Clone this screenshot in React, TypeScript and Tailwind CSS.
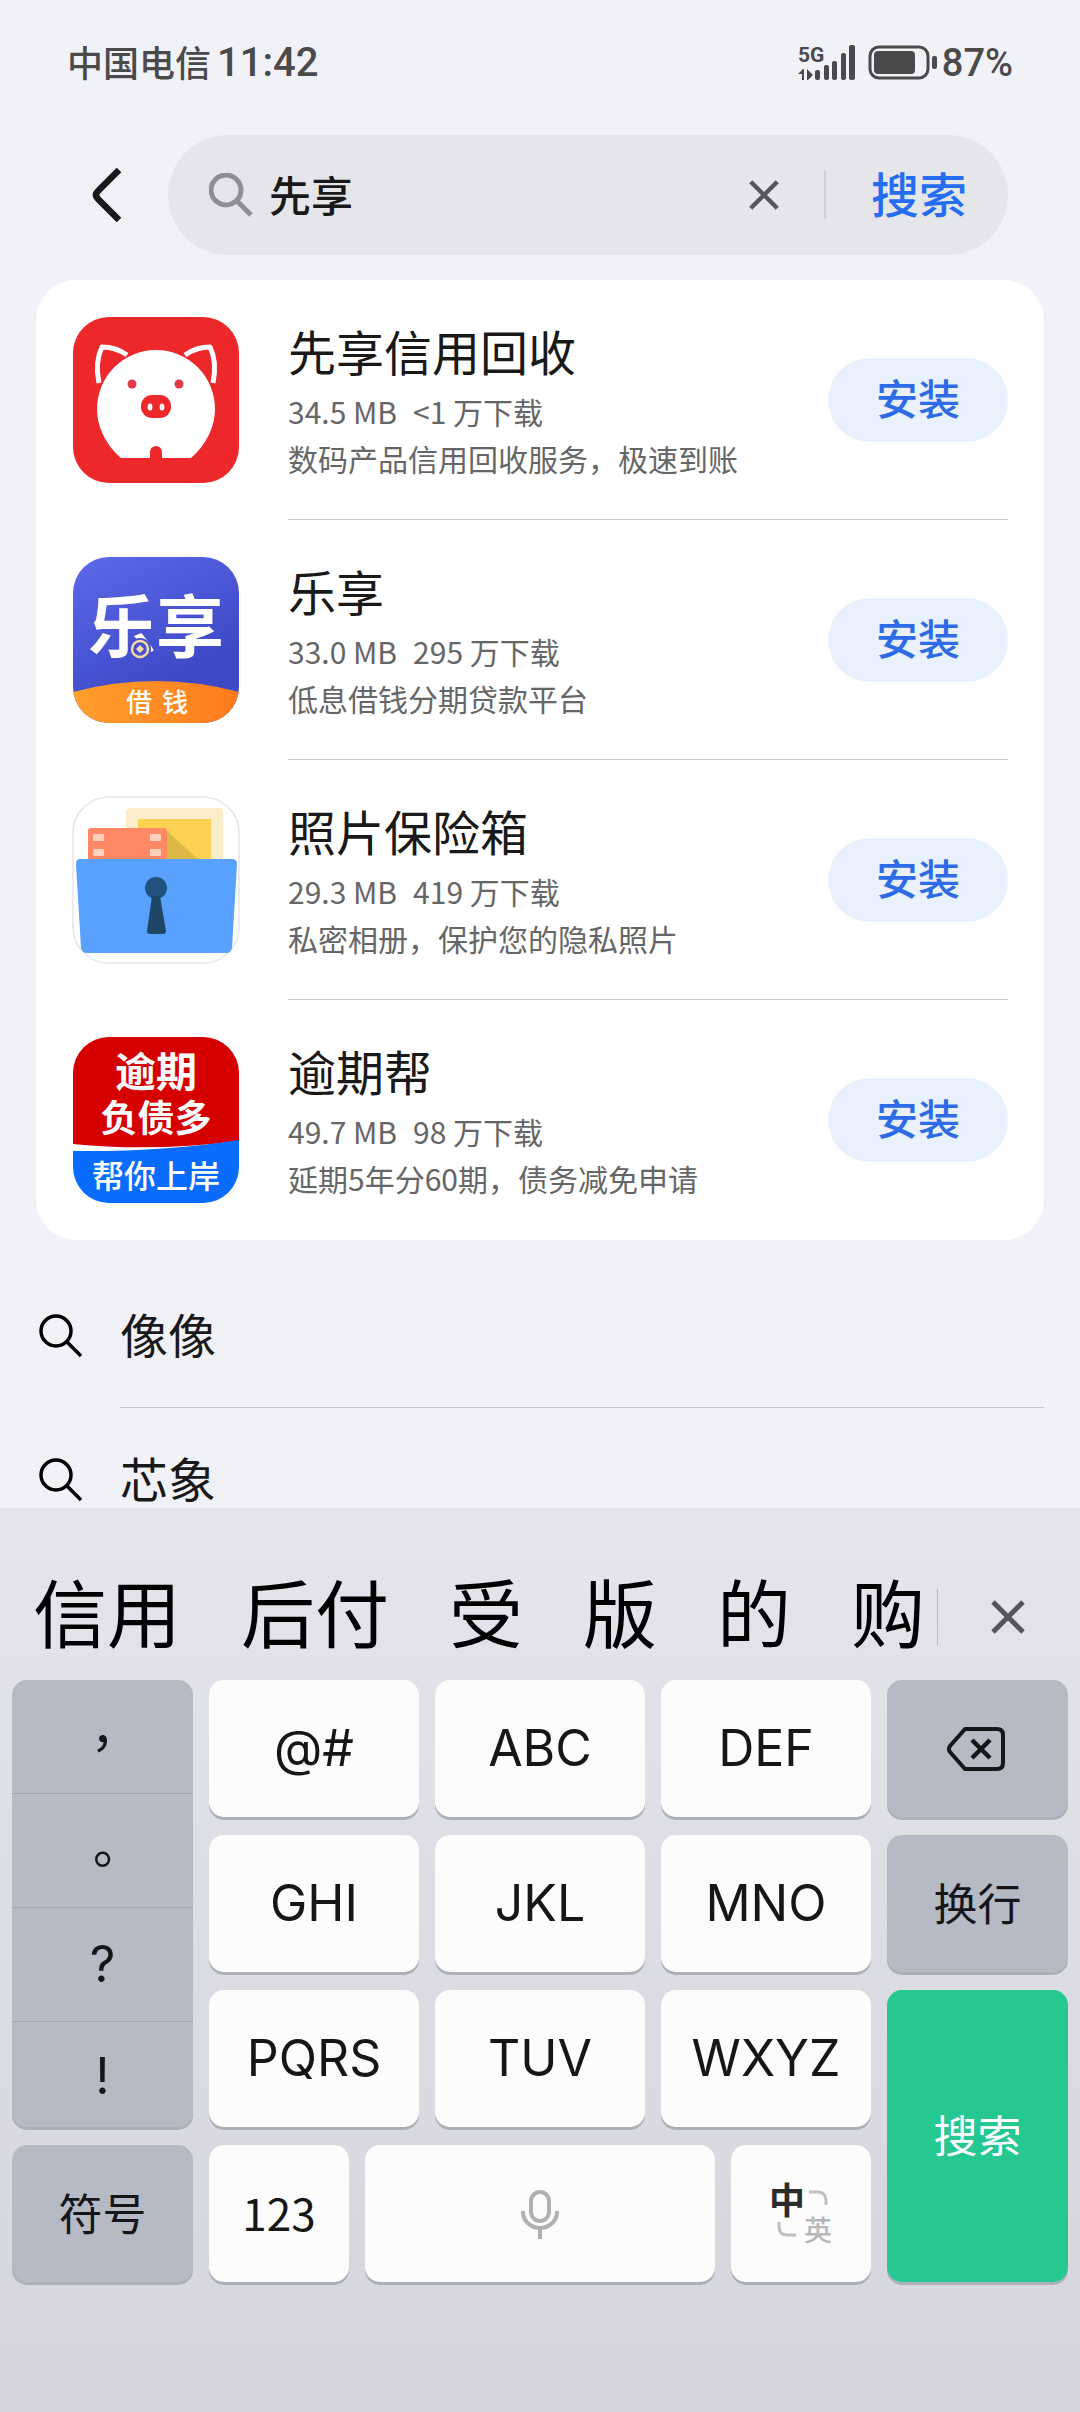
import { useState } from 'react';
import type { ReactNode } from 'react';

interface AppItem {
  name: string;
  size: string;
  downloads: string;
  desc: string;
  icon: ReactNode;
}

function PigIcon() {
  return (
    <svg viewBox="0 0 166 166" className="w-full h-full" aria-hidden="true">
      <rect width="166" height="166" rx="36" fill="#ec282b" />
      <path d="M26 66 C23 51 25 38 29 30 C38 30 47 33 54 38" fill="none" stroke="#fff" strokeWidth="5" strokeLinejoin="round" />
      <path d="M140 66 C143 51 141 38 137 30 C128 30 119 33 112 38" fill="none" stroke="#fff" strokeWidth="5" strokeLinejoin="round" />
      <path d="M48 141 C33 128 24 110 24 92 A59 59 0 0 1 142 92 C142 110 133 128 118 141 H89 V135 A6 6 0 0 0 77 135 V141 Z" fill="#fff" />
      <circle cx="59" cy="67" r="4.5" fill="#e23a48" />
      <circle cx="106" cy="67" r="4.5" fill="#e23a48" />
      <rect x="68" y="78" width="30" height="23" rx="11" fill="#ec282b" />
      <ellipse cx="77" cy="90" rx="2.4" ry="3.6" fill="#fff" />
      <ellipse cx="89" cy="90" rx="2.4" ry="3.6" fill="#fff" />
    </svg>
  );
}

function LexiangIcon() {
  return (
    <svg viewBox="0 0 166 166" className="w-full h-full" aria-hidden="true">
      <defs>
        <linearGradient id="lexiang-bg" x1="0.2" y1="0" x2="0.7" y2="1">
          <stop offset="0" stopColor="#5966e6" />
          <stop offset="0.75" stopColor="#3f49c6" />
        </linearGradient>
        <linearGradient id="lexiang-orange" x1="0" y1="0" x2="1" y2="0">
          <stop offset="0" stopColor="#ff9f2c" />
          <stop offset="1" stopColor="#ff7a1c" />
        </linearGradient>
        <clipPath id="lexiang-clip">
          <rect width="166" height="166" rx="36" />
        </clipPath>
      </defs>
      <g clipPath="url(#lexiang-clip)">
        <rect width="166" height="166" fill="url(#lexiang-bg)" />
        <text x="15" y="95" fontSize="68" fontWeight="700" fill="#fff">乐享</text>
        <circle cx="67" cy="92" r="11" fill="#4550cd" />
        <circle cx="67" cy="92" r="8" fill="none" stroke="#f6d7a8" strokeWidth="2.5" />
        <path d="M67 88 L71 92 L67 96 L63 92 Z" fill="#f6d7a8" />
        <path d="M0 135 Q83 113 166 135 V166 H0 Z" fill="url(#lexiang-orange)" />
        <text x="53" y="155" fontSize="26" fontWeight="500" fill="#fff">借</text>
        <text x="89" y="155" fontSize="26" fontWeight="500" fill="#fff">钱</text>
      </g>
    </svg>
  );
}

function PhotoSafeIcon() {
  return (
    <svg viewBox="0 0 166 166" className="w-full h-full overflow-visible" aria-hidden="true">
      <rect x="0" y="0" width="166" height="166" rx="36" fill="#fff" stroke="#e4e7ea" strokeWidth="1.5" />
      <path d="M53 64 V15 Q53 11 57 11 H146 Q150 11 150 15 V64 Z" fill="#fbedca" />
      <rect x="65" y="22" width="73" height="42" fill="#fcd253" />
      <path d="M94 34 L126 63 H94 Z" fill="#dbb946" />
      <path d="M15 64 V34 Q15 31 18 31 H91 Q94 31 94 34 V64 Z" fill="#ff8965" />
      <g fill="#ffd0bd">
        <rect x="20" y="37" width="11" height="7" rx="1" />
        <rect x="77" y="37" width="11" height="7" rx="1" />
        <rect x="20" y="52" width="11" height="7" rx="1" />
        <rect x="77" y="52" width="11" height="7" rx="1" />
      </g>
      <path d="M7 62 H159 Q164 62 164 67 L159 151 Q158 156 153 156 H14 Q9 156 8 151 L3 67 Q3 62 7 62 Z" fill="#58a1ff" />
      <circle cx="83" cy="91" r="11" fill="#20517f" />
      <path d="M79 99 H87 L93 134 Q93 137 90 137 H77 Q74 137 74 134 Z" fill="#1f4868" />
    </svg>
  );
}

function YuqiIcon() {
  return (
    <svg viewBox="0 0 166 166" className="w-full h-full" aria-hidden="true">
      <defs>
        <clipPath id="yuqi-clip">
          <rect width="166" height="166" rx="36" />
        </clipPath>
      </defs>
      <g clipPath="url(#yuqi-clip)">
        <rect width="166" height="166" fill="#fff" />
        <path d="M0 0 H166 V104 Q80 115 0 107 Z" fill="#d50000" />
        <path d="M0 114 Q90 115 166 103 V166 H0 Z" fill="#0a6bff" />
        <text x="83" y="50" fontSize="41" fontWeight="700" fill="#fff" textAnchor="middle">逾期</text>
        <text x="83" y="95" fontSize="37" fontWeight="700" fill="#fff" textAnchor="middle">负债多</text>
        <text x="83" y="151" fontSize="32" fontWeight="500" fill="#fff" textAnchor="middle">帮你上岸</text>
      </g>
    </svg>
  );
}

function SearchIcon({ className, strokeWidth }: { className: string; strokeWidth: number }) {
  return (
    <svg viewBox="0 0 44 44" className={className} fill="none" stroke="currentColor" strokeWidth={strokeWidth} aria-hidden="true">
      <circle cx="17" cy="17" r="15" />
      <path d="M27.5 27.5 L42 42" />
    </svg>
  );
}

function CloseIcon({ className }: { className: string }) {
  return (
    <svg viewBox="0 0 34 34" className={className} fill="none" stroke="currentColor" strokeWidth="5" aria-hidden="true">
      <path d="M2 2 L32 32 M32 2 L2 32" />
    </svg>
  );
}

function SignalIcon() {
  return (
    <svg viewBox="0 0 58 36" className="w-[58px] h-9 overflow-visible" fill="#4a4a4a" aria-label="5G">
      <text x="0" y="17" fontSize="21" fontWeight="700" fontFamily="Roboto, sans-serif">5G</text>
      <path d="M0 29 L5 24 H6 V35 H4 V29 Z M9 24 L15 30 L10 35 H9 Z" />
      <rect x="17" y="25" width="5" height="10" rx="2" />
      <rect x="26" y="20" width="5" height="15" rx="2" />
      <rect x="34" y="16" width="5" height="19" rx="2" />
      <rect x="43" y="8" width="5" height="27" rx="2" />
      <rect x="51" y="0" width="6" height="35" rx="2" />
    </svg>
  );
}

function BatteryIcon() {
  return (
    <svg viewBox="0 0 70 36" className="w-[70px] h-9" aria-hidden="true">
      <rect x="2" y="2" width="58" height="31" rx="9" fill="none" stroke="#4a4a4a" strokeWidth="3" />
      <rect x="6" y="6" width="41" height="23" rx="4" fill="#4a4a4a" />
      <rect x="64" y="11" width="5" height="13" rx="2" fill="#4a4a4a" />
    </svg>
  );
}

function StatusBar() {
  return (
    <div className="flex items-center justify-between h-32 px-[67px] pb-0.5 text-[#4a4a4a] font-medium shrink-0">
      <div className="flex items-center gap-1.5">
        <span className="pb-1 text-[36px]">中国电信</span>
        <span className="font-[Roboto] text-[40px]">11:42</span>
      </div>
      <div className="flex items-center">
        <SignalIcon />
        <span className="w-3" />
        <BatteryIcon />
        <span className="ml-1 font-[Roboto] text-[38px]">87%</span>
      </div>
    </div>
  );
}

function SearchBar() {
  const [query, setQuery] = useState('先享');

  return (
    <div className="flex items-center pt-[7px] pl-[90px] pr-[72px] shrink-0">
      <button aria-label="返回" className="w-[78px] text-[#191919]">
        <svg viewBox="0 0 34 54" className="w-[34px] h-[54px]" fill="none" stroke="currentColor" strokeWidth="6.5" strokeLinejoin="round" aria-hidden="true">
          <path d="M29 2 L8 23 Q4 27 8 31 L29 52" />
        </svg>
      </button>
      <form
        className="flex items-center flex-1 min-w-0 h-[120px] pl-[41px] pr-[41px] rounded-full bg-[#e5e6ea]"
        onSubmit={e => {
          e.preventDefault();
        }}
      >
        <SearchIcon className="w-11 h-11 text-[#8e8f93] shrink-0" strokeWidth={5} />
        <input
          aria-label="搜索应用"
          className="flex-1 min-w-0 ml-4 pb-1 text-[42px] font-medium text-[#191919] bg-transparent outline-none"
          value={query}
          onChange={e => setQuery(e.currentTarget.value)}
        />
        <button type="button" aria-label="清除" className="text-[#55565a]" onClick={() => setQuery('')}>
          <CloseIcon className="w-[30px] h-[30px]" />
        </button>
        <span className="w-0.5 h-12 mx-[45px] bg-[#cfd0d5]" />
        <button type="submit" className="pb-1.5 text-[48px] font-medium text-[#256df2]">搜索</button>
      </form>
    </div>
  );
}

const apps: AppItem[] = [
  { name: '先享信用回收', size: '34.5 MB', downloads: '<1 万下载', desc: '数码产品信用回收服务，极速到账', icon: <PigIcon /> },
  { name: '乐享', size: '33.0 MB', downloads: '295 万下载', desc: '低息借钱分期贷款平台', icon: <LexiangIcon /> },
  { name: '照片保险箱', size: '29.3 MB', downloads: '419 万下载', desc: '私密相册，保护您的隐私照片', icon: <PhotoSafeIcon /> },
  { name: '逾期帮', size: '49.7 MB', downloads: '98 万下载', desc: '延期5年分60期，债务减免申请', icon: <YuqiIcon /> },
];

const suggestions = ['像像', '芯象'];

function AppRow({ item }: { item: AppItem }) {
  return (
    <li className="group flex items-center h-60">
      <div className="w-[166px] h-[166px] ml-px mr-[49px] shrink-0">{item.icon}</div>
      <div className="flex items-center flex-1 min-w-0 h-full border-b border-[#cbccce] group-last:border-transparent">
        <div className="flex-1 min-w-0">
          <h2 className="mb-1.5 text-[48px] leading-[64px] text-[#191919]">{item.name}</h2>
          <p className="flex gap-4 text-[30px] leading-[47px] text-[#666666]">
            <span>{item.size}</span>
            <span>{item.downloads}</span>
          </p>
          <p className="text-[30px] leading-[47px] text-[#666666] truncate">{item.desc}</p>
        </div>
        <button className="w-[180px] h-[84px] pb-1.5 rounded-full bg-[#e9f1fe] text-[42px] leading-[60px] font-medium text-[#2d6ce6]">安装</button>
      </div>
    </li>
  );
}

function SuggestionRow({ text }: { text: string }) {
  return (
    <li className="flex items-center h-36">
      <SearchIcon className="w-11 h-11 ml-[3px] mr-[37px] text-black shrink-0" strokeWidth={3.5} />
      <a href="#" className="flex items-center flex-1 h-full pb-1.5 border-b border-[#c1c3c9] text-[48px] text-[#191919]">{text}</a>
    </li>
  );
}

const candidates = ['信用', '后付', '受', '版', '的', '购'];
const letterKeys = ['@#', 'ABC', 'DEF', 'GHI', 'JKL', 'MNO', 'PQRS', 'TUV', 'WXYZ'];

const keyBase = 'flex items-center justify-center rounded-[15px] shadow-[0_3px_0_#aeb0b7]';
const whiteKey = `${keyBase} bg-[#fcfcfc] text-[#161616]`;
const grayKey = `${keyBase} bg-[#b6bac4] text-[#14161a]`;

function Keyboard() {
  return (
    <section aria-label="键盘" className="shrink-0 pt-[46px] px-3 pb-[130px] bg-linear-to-b from-[#e5e6ea] via-[#dcdde4] to-[#d5d6dc]">
      <div className="flex items-center h-[126px] pl-[21px]">
        <div className="flex flex-1 gap-[60px] pb-3.5 text-[74px] leading-[100px] text-black whitespace-nowrap">
          {candidates.map(word => (
            <button key={word}>{word}</button>
          ))}
        </div>
        <span className="w-px h-14 bg-[#b9bac0]" />
        <button aria-label="收起候选" className="ml-[53px] mr-[43px] text-[#55565a]">
          <CloseIcon className="w-[34px] h-[34px]" />
        </button>
      </div>

      <div className="grid grid-cols-[181px_repeat(3,minmax(0,1fr))_181px] auto-rows-[137px] gap-x-4 gap-y-[18px]">
        <div className={`${grayKey} row-span-3 col-start-1 row-start-1 flex-col justify-start overflow-hidden text-[50px]`}>
          <button className="w-full h-[114px] pt-2 border-b border-[#a3a7b0] font-['Noto_Sans_CJK_TC']">，</button>
          <button className="w-full h-[114px] pt-3 border-b border-[#a3a7b0] font-['Noto_Sans_CJK_TC']">。</button>
          <button className="w-full h-[114px] border-b border-[#a3a7b0] font-[Inter]">?</button>
          <button className="w-full flex-1 pt-1 font-[Inter]">!</button>
        </div>
        {letterKeys.map(label => (
          <button key={label} className={`${whiteKey} font-[Inter] text-[50px]`}>{label}</button>
        ))}
        <button aria-label="删除" className={`${grayKey} col-start-5 row-start-1`}>
          <svg viewBox="0 0 58 44" className="w-[58px] h-11 mr-1" fill="none" stroke="currentColor" strokeWidth="4" aria-hidden="true">
            <path d="M18 2 H50 Q56 2 56 8 V36 Q56 42 50 42 H18 L3 25 Q1 22 3 19 Z" strokeLinejoin="round" />
            <path d="M25 13 L43 31 M43 13 L25 31" strokeWidth="4.5" />
          </svg>
        </button>
        <button className={`${grayKey} col-start-5 row-start-2 pb-1 text-[44px]`}>换行</button>
        <button className={`${keyBase} col-start-5 row-start-3 row-span-2 pb-1 bg-[#26c892] text-white text-[44px]`}>搜索</button>

        <button className={`${grayKey} col-start-1 row-start-4 pb-1 text-[44px]`}>符号</button>
        <div className="flex gap-4 col-start-2 col-span-3 row-start-4">
          <button className={`${whiteKey} flex-[2] pb-1 text-[44px]`}>123</button>
          <button aria-label="语音输入" className={`${whiteKey} flex-[5]`}>
            <svg viewBox="0 0 40 50" className="w-10 h-[50px]" fill="none" stroke="#b0b0b0" strokeWidth="4" aria-hidden="true">
              <rect x="11" y="3" width="18" height="29" rx="9" />
              <path d="M3 22 V23 A17 16 0 0 0 37 23 V22 M20 39 V50" />
            </svg>
          </button>
          <button aria-label="中英切换" className={`${whiteKey} flex-[2] pb-1`}>
            <span className="grid grid-cols-[34px_28px] grid-rows-[34px_28px] items-center justify-items-center">
              <span className="text-[36px] leading-[32px] font-bold text-[#2b2b2b]">中</span>
              <svg viewBox="0 0 20 16" className="w-5 h-4" fill="none" stroke="#c0c0c0" strokeWidth="3" aria-hidden="true">
                <path d="M1 2 H10 Q18 2 18 11 V15" />
              </svg>
              <svg viewBox="0 0 20 16" className="w-5 h-4" fill="none" stroke="#c0c0c0" strokeWidth="3" aria-hidden="true">
                <path d="M2 1 V5 Q2 14 10 14 H19" />
              </svg>
              <span className="text-[28px] leading-[28px] font-medium text-[#b8b8b8]">英</span>
            </span>
          </button>
        </div>
      </div>
    </section>
  );
}

export default function App() {
  return (
    <div lang="zh-CN" className="flex flex-col h-screen bg-[#f1f2f7] font-['Noto_Sans_CJK_SC',sans-serif]">
      <StatusBar />
      <SearchBar />
      <main className="flex-1 min-h-0 overflow-hidden px-9 pt-[25px]">
        <ul className="px-9 bg-white rounded-[40px]">
          {apps.map(item => (
            <AppRow key={item.name} item={item} />
          ))}
        </ul>
        <ul className="pt-6">
          {suggestions.map(text => (
            <SuggestionRow key={text} text={text} />
          ))}
        </ul>
      </main>
      <Keyboard />
    </div>
  );
}
